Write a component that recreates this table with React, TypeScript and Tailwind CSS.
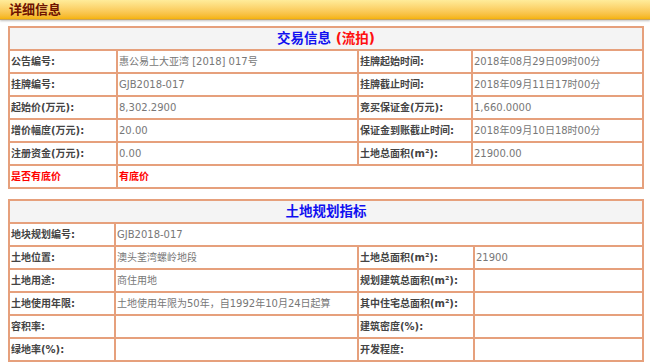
const font = { fontFamily: '"DejaVu Sans", "Noto Sans CJK SC", sans-serif' };

const tradeRows: [string, string, string, string][] = [
  ["公告编号:", "惠公易土大亚湾 [2018] 017号", "挂牌起始时间:", "2018年08月29日09时00分"],
  ["挂牌编号:", "GJB2018-017", "挂牌截止时间:", "2018年09月11日17时00分"],
  ["起始价(万元):", "8,302.2900", "竞买保证金(万元):", "1,660.0000"],
  ["增价幅度(万元):", "20.00", "保证金到账截止时间:", "2018年09月10日18时00分"],
  ["注册资金(万元):", "0.00", "土地总面积(m²):", "21900.00"],
];

const landRows: [string, string, string, string][] = [
  ["土地位置:", "澳头荃湾螺岭地段", "土地总面积(m²):", "21900"],
  ["土地用途:", "商住用地", "规划建筑总面积(m²):", ""],
  ["土地使用年限:", "土地使用年限为50年，自1992年10月24日起算", "其中住宅总面积(m²):", ""],
  ["容积率:", "", "建筑密度(%):", ""],
  ["绿地率(%):", "", "开发程度:", ""],
];

export default function App() {
  return (
    <main className="h-[363px] w-[650px] overflow-hidden bg-white" style={font}>
      <div className="flex h-[20px] items-center border-b border-[#c9a25a] bg-gradient-to-b from-[#ffec9a] to-[#f5b300] pl-[9px] shadow-[0_1px_2px_rgba(0,0,0,.25)]">
        <span className="text-[13px] font-bold text-[#6e1200]">详细信息</span>
      </div>

      <div className="px-[8px] pt-[6px]">
        <table className="w-[634px] table-fixed border-collapse">
          <colgroup>
            <col className="w-[108px]" />
            <col className="w-[241px]" />
            <col className="w-[114px]" />
            <col className="w-[171px]" />
          </colgroup>
          <tbody>
            <Title>
              <span className="text-[#1010f0]">交易信息</span>
              <span className="text-[#ff1010]"> (流拍)</span>
            </Title>
            {tradeRows.map((r) => (
              <Row key={r[0]} cells={r} />
            ))}
            <tr className="h-[23px]">
              <Cell label red>是否有底价</Cell>
              <td colSpan={3} className="border-2 border-[#e6a07c] px-[1px] text-[10px] font-bold text-[#ff0000]">
                有底价
              </td>
            </tr>
          </tbody>
        </table>

        <table className="mt-[10px] w-[634px] table-fixed border-collapse">
          <colgroup>
            <col className="w-[106px]" />
            <col className="w-[243px]" />
            <col className="w-[116px]" />
            <col className="w-[169px]" />
          </colgroup>
          <tbody>
            <Title>
              <span className="text-[#1010f0]">土地规划指标</span>
            </Title>
            <tr className="h-[23px]">
              <Cell label>地块规划编号:</Cell>
              <td colSpan={3} className="border-2 border-[#e6a07c] px-[1px] text-[10px] text-[#777]">
                GJB2018-017
              </td>
            </tr>
            {landRows.map((r) => (
              <Row key={r[0]} cells={r} />
            ))}
          </tbody>
        </table>
      </div>
    </main>
  );
}

function Title({ children }: { children: React.ReactNode }) {
  return (
    <tr className="h-[23px]">
      <td colSpan={4} className="border-2 border-[#e6a07c] bg-[#f4f4f4] text-center text-[13.5px] font-bold">
        {children}
      </td>
    </tr>
  );
}

function Row({ cells }: { cells: [string, string, string, string] }) {
  return (
    <tr className="h-[23px]">
      <Cell label>{cells[0]}</Cell>
      <Cell>{cells[1]}</Cell>
      <Cell label>{cells[2]}</Cell>
      <Cell>{cells[3]}</Cell>
    </tr>
  );
}

function Cell({ label, red, children }: { label?: boolean; red?: boolean; children?: React.ReactNode }) {
  return (
    <td
      className={
        label
          ? red
            ? "whitespace-nowrap border-2 border-[#e6a07c] px-[1px] text-[10px] font-bold text-[#ff0000]"
            : "whitespace-nowrap border-2 border-[#e6a07c] px-[1px] text-[10px] font-bold text-[#444]"
          : "whitespace-nowrap border-2 border-[#e6a07c] px-[1px] text-[10px] text-[#777]"
      }
    >
      {children}
    </td>
  );
}
